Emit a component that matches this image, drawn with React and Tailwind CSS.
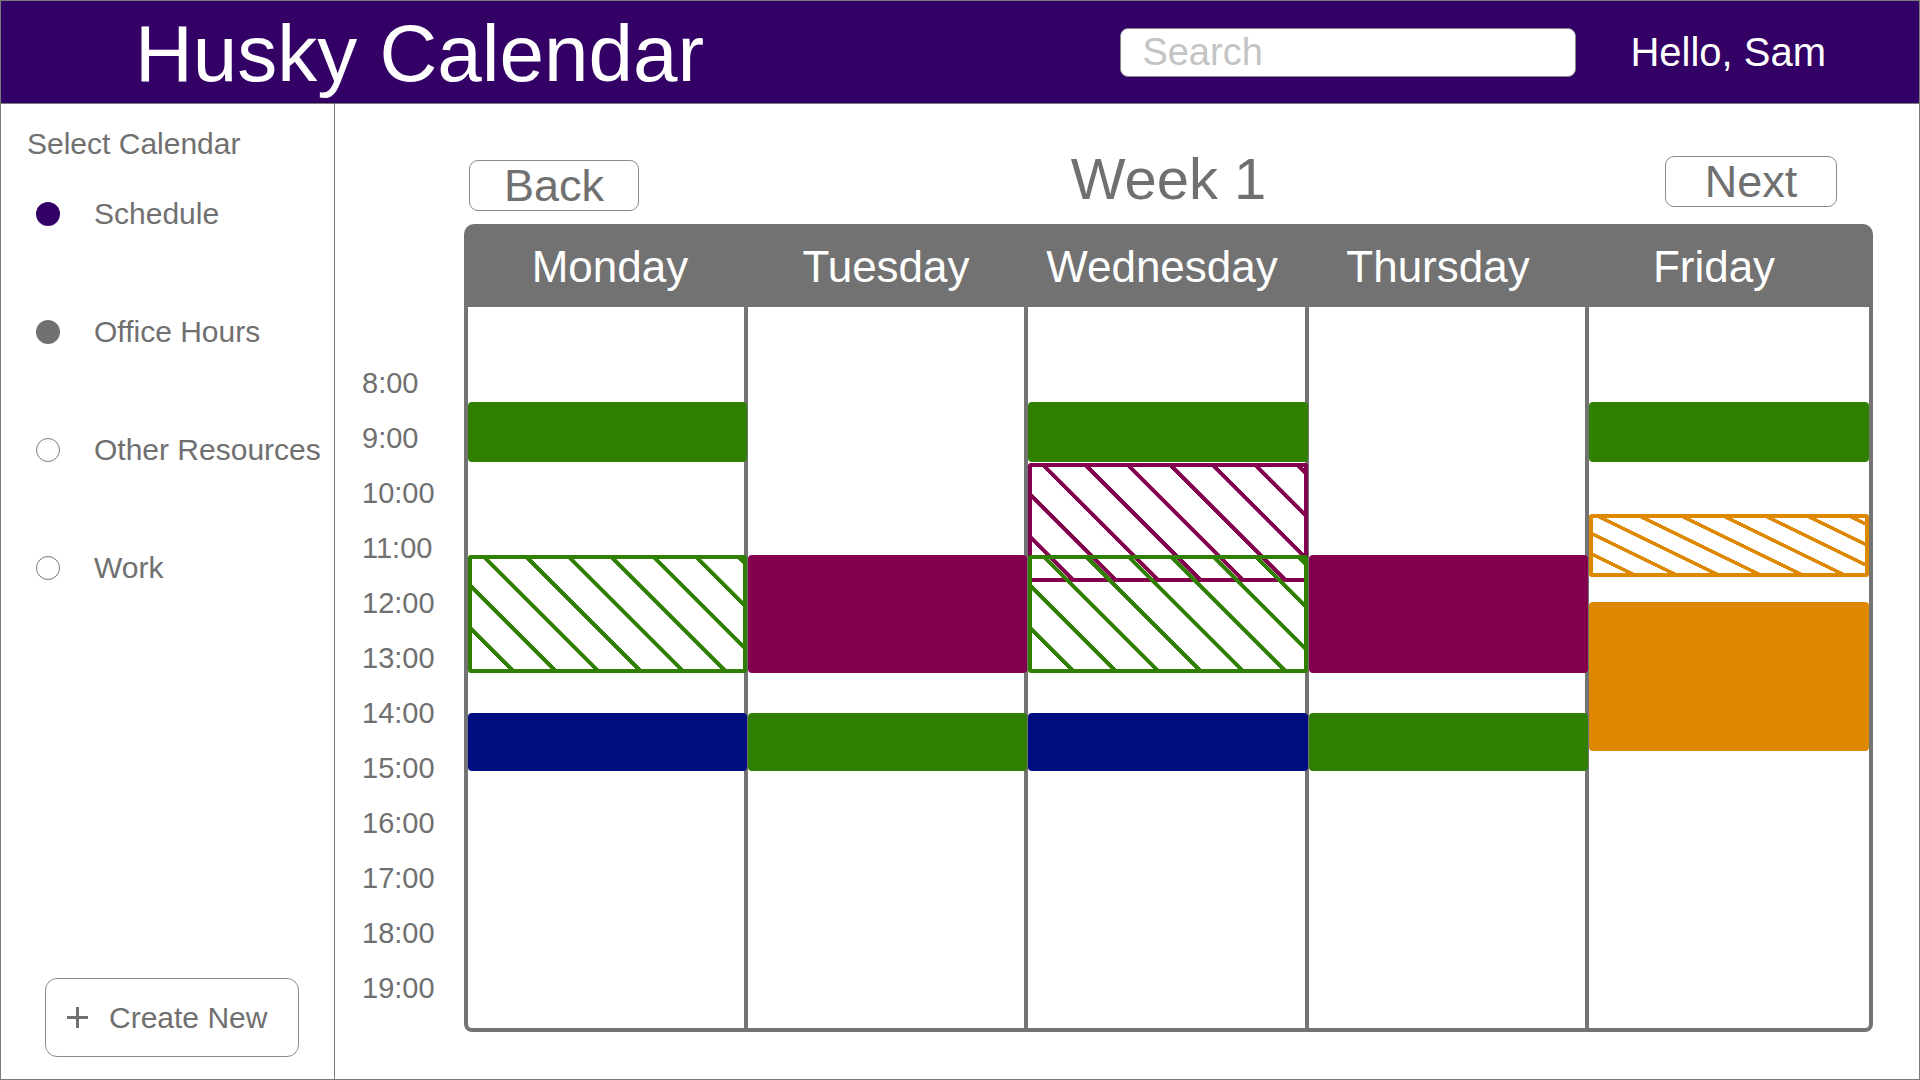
import React from 'react';

const days = ['Monday', 'Tuesday', 'Wednesday', 'Thursday', 'Friday'];

const times = ['8:00', '9:00', '10:00', '11:00', '12:00', '13:00', '14:00', '15:00', '16:00', '17:00', '18:00', '19:00'];

const calendars = [
    { name: 'Schedule', dot: 'bg-[#330066]' },
    { name: 'Office Hours', dot: 'bg-[#717171]' },
    { name: 'Other Resources', dot: 'bg-white border border-[#7a7a7a]' },
    { name: 'Work', dot: 'bg-white border border-[#7a7a7a]' },
];

const solid = {
    green: 'bg-[#2f7f00] rounded-[4px]',
    purple: 'bg-[#82004e] rounded-[4px]',
    blue: 'bg-[#000d80] rounded-[4px]',
    orange: 'bg-[#de8800] rounded-[4px]',
};

const hatched = {
    green: 'border-4 border-[#2f7f00] rounded-[3px] bg-[repeating-linear-gradient(45deg,transparent_0px,transparent_25.5px,#2f7f00_26px,#2f7f00_29.5px,transparent_30px)]',
    purple: 'border-4 border-[#82004e] rounded-[3px] bg-[repeating-linear-gradient(45deg,transparent_0px,transparent_25.5px,#82004e_26px,#82004e_29.5px,transparent_30px)]',
    orange: 'border-4 border-[#de8800] rounded-[3px] bg-[repeating-linear-gradient(26deg,transparent_0px,transparent_14.4px,#de8800_14.9px,#de8800_18px,transparent_18.4px)]',
};

// top / height in px from the top of the day columns
const events = [
    { day: 0, top: 95, height: 60, color: 'green' },
    { day: 0, top: 248, height: 118, color: 'green', hatch: true },
    { day: 0, top: 406, height: 58, color: 'blue' },
    { day: 1, top: 248, height: 118, color: 'purple' },
    { day: 1, top: 406, height: 58, color: 'green' },
    { day: 2, top: 95, height: 60, color: 'green' },
    { day: 2, top: 156, height: 119, color: 'purple', hatch: true },
    { day: 2, top: 248, height: 118, color: 'green', hatch: true },
    { day: 2, top: 406, height: 58, color: 'blue' },
    { day: 3, top: 248, height: 118, color: 'purple' },
    { day: 3, top: 406, height: 58, color: 'green' },
    { day: 4, top: 95, height: 60, color: 'green' },
    { day: 4, top: 207, height: 63, color: 'orange', hatch: true },
    { day: 4, top: 295, height: 149, color: 'orange' },
];

const App = () => {
    return (
        <div className="w-[1920px] h-[1080px] flex flex-col border border-[#7a7a7a] bg-white overflow-hidden font-['Liberation_Sans',Arial,sans-serif]">
            {/* Top bar */}
            <header className="h-[103px] shrink-0 bg-[#330066] border-b border-[#7a7a7a] flex items-center">
                <h1 className="ml-[134px] mt-[4px] text-[80px] leading-none text-white">Husky Calendar</h1>
                <input
                    type="text"
                    placeholder="Search"
                    className="ml-auto w-[456px] h-[49px] rounded-[8px] bg-white border border-[#8a8a8a] pl-[21px] text-[38px] leading-none text-[#555] placeholder:text-[#c4c4c4] outline-none"
                />
                <span className="ml-[54px] mr-[93px] text-[40px] leading-none text-white">Hello, Sam</span>
            </header>

            <div className="flex flex-1">
                {/* Sidebar */}
                <aside className="w-[334px] shrink-0 border-r border-[#7a7a7a] flex flex-col text-[#707070]">
                    <h2 className="ml-[26px] mt-[25px] text-[30px] leading-[30px]">Select Calendar</h2>
                    <div className="mt-[35px] flex flex-col gap-[78px]">
                        {calendars.map((c) => (
                            <div key={c.name} className="h-[40px] flex items-center">
                                <span className={`ml-[35px] size-[24px] rounded-full ${c.dot}`}></span>
                                <span className="ml-[34px] text-[30px] leading-none">{c.name}</span>
                            </div>
                        ))}
                    </div>
                    <button className="mt-auto mb-[22px] ml-[44px] w-[254px] h-[79px] rounded-[12px] border border-[#8a8a8a] flex items-center pl-[20px] text-[30px] leading-none text-[#707070]">
                        <svg width="23" height="23" viewBox="0 0 23 23" className="shrink-0">
                            <path d="M11.5 1v21M1 11.5h21" stroke="#707070" strokeWidth="3" fill="none" />
                        </svg>
                        <span className="ml-[20px]">Create New</span>
                    </button>
                </aside>

                {/* Time labels */}
                <div className="w-[129px] shrink-0 pl-[27px] pt-[252px] flex flex-col text-[#707070]">
                    {times.map((t) => (
                        <div key={t} className="h-[55px] flex items-center text-[29px] leading-none">{t}</div>
                    ))}
                </div>

                {/* Week view */}
                <div className="w-[1409px] shrink-0 flex flex-col">
                    <div className="h-[120px] grid grid-cols-[1fr_auto_1fr] items-start text-[#707070]">
                        <button className="justify-self-start ml-[5px] mt-[56px] w-[170px] h-[51px] rounded-[9px] border border-[#8a8a8a] flex items-center justify-center text-[45px] leading-none">
                            Back
                        </button>
                        <div className="mt-[46px] text-[58px] leading-none">Week 1</div>
                        <button className="justify-self-end mr-[36px] mt-[52px] w-[172px] h-[51px] rounded-[9px] border border-[#8a8a8a] flex items-center justify-center text-[45px] leading-none">
                            Next
                        </button>
                    </div>

                    <div className="h-[83px] bg-[#727272] rounded-t-[10px] pl-[8px] pr-[21px] grid grid-cols-5 items-center text-center text-white text-[44px] leading-none">
                        {days.map((d) => (
                            <div key={d} className="pt-[2px]">{d}</div>
                        ))}
                    </div>

                    <div className="h-[725px] grid grid-cols-5 border-x-4 border-b-4 border-[#737373] rounded-b-[8px] divide-x-4 divide-[#737373]">
                        {days.map((d, i) => (
                            <div key={d} className="relative">
                                {events
                                    .filter((e) => e.day === i)
                                    .map((e, k) => (
                                        <div
                                            key={k}
                                            className={`absolute z-10 left-0 ${i === 4 ? 'right-0' : 'right-[-3px]'} ${e.hatch ? hatched[e.color] : solid[e.color]}`}
                                            style={{ top: e.top, height: e.height }}
                                        ></div>
                                    ))}
                            </div>
                        ))}
                    </div>
                </div>
            </div>
        </div>
    );
};

export default App;
